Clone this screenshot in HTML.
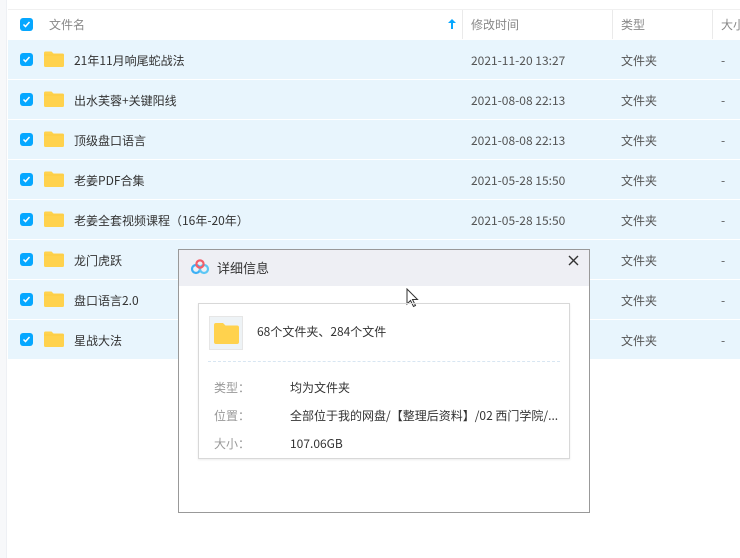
<!DOCTYPE html>
<html><head><meta charset="utf-8"><style>
*{margin:0;padding:0;box-sizing:border-box}
body{width:740px;height:558px;background:#fff;font-family:"Noto Sans CJK SC","Liberation Sans",sans-serif;font-size:12px;color:#424e67;position:relative;overflow:hidden}
.strip{position:absolute;left:0;top:0;width:7px;height:558px;background:#f7f8fa;border-right:1px solid #eef0f4}
.topline{position:absolute;left:8px;top:9px;width:732px;height:1px;background:#f0f0f0}
.hdr{position:absolute;left:8px;top:10px;width:732px;height:29px;color:#888;}
.row{position:absolute;left:8px;width:732px;height:39px;background:#e8f5fd}
.cb{position:absolute;left:12px;width:13px;height:13px;border-radius:3px;background:#06a7ff}
.cb svg{position:absolute;left:2px;top:2px}
.t{position:absolute;white-space:nowrap;line-height:16px}
.fold{position:absolute;left:36px;width:20px;height:16px}
.div{position:absolute;top:10px;width:1px;height:29px;background:#eaeaea}
</style></head><body>
<div class="strip"></div>
<div class="topline"></div>
<div class="hdr">
 <div class="cb" style="top:8px"><svg width="9" height="9" viewBox="0 0 9 9"><path d="M1.5 4.5l2 2 4-4.5" stroke="#fff" stroke-width="1.5" fill="none"/></svg></div>
 <div class="t" style="left:41px;top:7px">文件名</div>
 <svg style="position:absolute;left:440px;top:9px" width="8" height="10" viewBox="0 0 8 10"><path d="M4 0L0 4h3v6h2V4h3z" fill="#06a7ff"/></svg>
 <div class="t" style="left:463px;top:7px">修改时间</div>
 <div class="t" style="left:613px;top:7px">类型</div>
 <div class="t" style="left:713px;top:7px">大小</div>
</div>
<div class="div" style="left:462px"></div><div class="div" style="left:612px"></div><div class="div" style="left:712px"></div>
<div id="rows"></div>
<script>
var d=[["21年11月响尾蛇战法","2021-11-20 13:27"],["出水芙蓉+关键阳线","2021-08-08 22:13"],["顶级盘口语言","2021-08-08 22:13"],["老姜PDF合集","2021-05-28 15:50"],["老姜全套视频课程（16年-20年）","2021-05-28 15:50"],["龙门虎跃",""],["盘口语言2.0",""],["星战大法",""]];
var h="";d.forEach(function(r,i){var y=40+i*40;h+='<div class="row" style="top:'+y+'px"><div class="cb" style="top:13px"><svg width="9" height="9" viewBox="0 0 9 9"><path d="M1.5 4.5l2 2 4-4.5" stroke="#fff" stroke-width="1.5" fill="none"/></svg></div><svg class="fold" style="top:11px" viewBox="0 0 20 16"><path d="M0 2a1.5 1.5 0 0 1 1.5-1.5h6l2 2h9A1.5 1.5 0 0 1 20 4v10.5a1.5 1.5 0 0 1-1.5 1.5h-17A1.5 1.5 0 0 1 0 14.5z" fill="#ffd24d"/><path d="M0 4h20" stroke="#f8c53a" stroke-width="0.6"/></svg><div class="t" style="left:66px;top:13px;color:#333">'+r[0]+'</div><div class="t" style="left:463px;top:13px;color:#555">'+r[1]+'</div><div class="t" style="left:613px;top:13px;color:#555">文件夹</div><div class="t" style="left:713px;top:13px;color:#555">-</div></div>';});
document.getElementById("rows").innerHTML=h;
</script>
<div style="position:absolute;left:178px;top:249px;width:412px;height:264px;border:1px solid #999;background:#fff">
 <div style="position:absolute;left:0;top:0;width:410px;height:36px;background:#eeeff4"></div>
 <svg style="position:absolute;left:11px;top:9px" width="20" height="16" viewBox="0 0 20 16"><circle cx="6" cy="10" r="4" fill="none" stroke="#3cb0f5" stroke-width="2.2"/><circle cx="14" cy="10" r="4" fill="none" stroke="#5cc7f5" stroke-width="2.2"/><circle cx="10" cy="5" r="3.6" fill="none" stroke="#f25e6a" stroke-width="2.2"/></svg>
 <div class="t" style="left:38px;top:10px;font-size:13px;color:#333">详细信息</div>
 <svg style="position:absolute;left:389px;top:5px" width="11" height="11" viewBox="0 0 11 11"><path d="M1 1l9 9M10 1l-9 9" stroke="#333" stroke-width="1.4"/></svg>
 <svg style="position:absolute;left:227px;top:38px" width="14" height="20" viewBox="0 0 14 20"><path d="M1 1v15l3.5-3.5 3 6 2-1-3-6h5z" fill="#fff" stroke="#333" stroke-width="1"/></svg>
 <div style="position:absolute;left:19px;top:53px;width:372px;height:156px;border:1px solid #d8d8d8;box-shadow:0 1px 2px rgba(0,0,0,.08)">
  <div style="position:absolute;left:10px;top:12px;width:34px;height:34px;border:1px solid #e6e6e6;background:#eef3f6"><svg style="position:absolute;left:4px;top:6px" width="25" height="21" viewBox="0 0 25 21"><path d="M0 2a2 2 0 0 1 2-2h7l2.5 2.5H23a2 2 0 0 1 2 2V19a2 2 0 0 1-2 2H2a2 2 0 0 1-2-2z" fill="#ffd24d"/></svg></div>
  <div class="t" style="left:58px;top:20px;color:#333">68个文件夹、284个文件</div>
  <div style="position:absolute;left:9px;top:57px;width:352px;border-top:1px dashed #d8e6f2"></div>
  <div class="t" style="left:15px;top:76px;color:#999">类型：</div><div class="t" style="left:91px;top:76px;color:#333">均为文件夹</div>
  <div class="t" style="left:15px;top:104px;color:#999">位置：</div><div class="t" style="left:91px;top:104px;color:#333">全部位于我的网盘/【整理后资料】/02 西门学院/...</div>
  <div class="t" style="left:15px;top:132px;color:#999">大小：</div><div class="t" style="left:91px;top:132px;color:#333">107.06GB</div>
 </div>
</div>
</body></html>
